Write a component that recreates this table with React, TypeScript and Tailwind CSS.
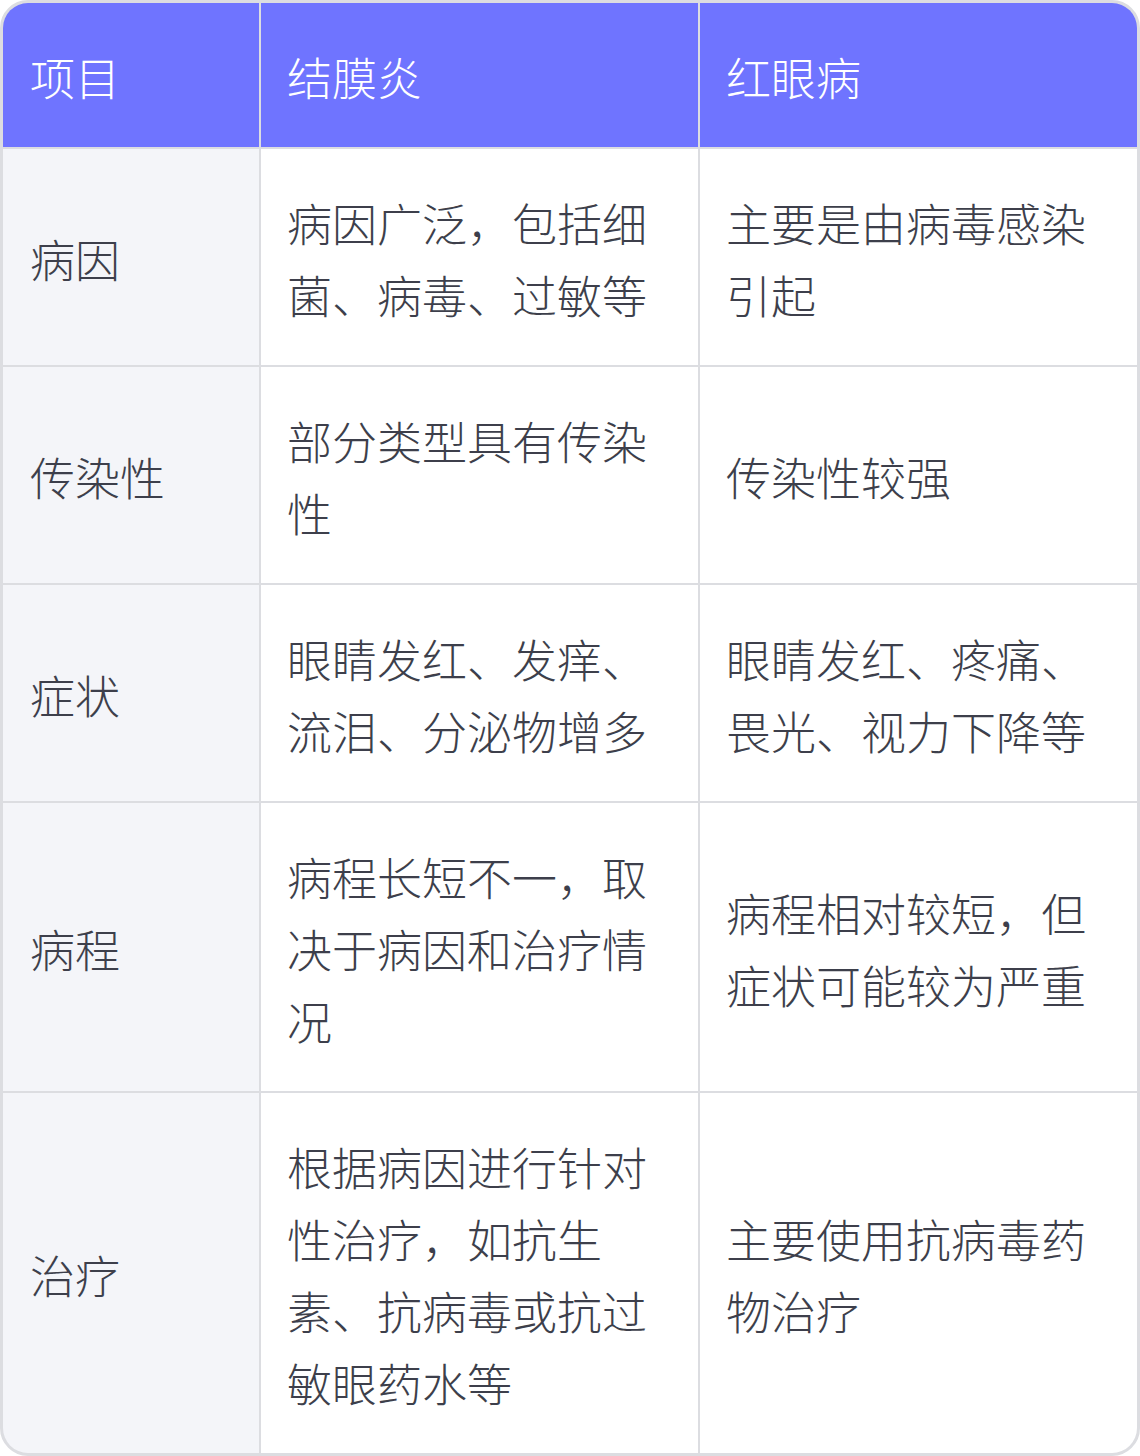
const rows: [string, string, string][] = [
  ['病因', '病因广泛，包括细菌、病毒、过敏等', '主要是由病毒感染引起'],
  ['传染性', '部分类型具有传染性', '传染性较强'],
  ['症状', '眼睛发红、发痒、流泪、分泌物增多', '眼睛发红、疼痛、畏光、视力下降等'],
  ['病程', '病程长短不一，取决于病因和治疗情况', '病程相对较短，但症状可能较为严重'],
  ['治疗', '根据病因进行针对性治疗，如抗生素、抗病毒或抗过敏眼药水等', '主要使用抗病毒药物治疗'],
];

export default function App() {
  return (
    <div
      className="w-[1140px] bg-white"
      style={{ fontFamily: '"Noto Sans CJK SC", "Noto Sans", sans-serif' }}
    >
      <div className="grid grid-cols-[256px_437px_437px] gap-[2px] bg-[#dcdde1] border-[3px] border-[#dcdde1] rounded-[28px] overflow-hidden text-[45px] leading-[72px] font-light">
        {['项目', '结膜炎', '红眼病'].map((h, i) => (
          <div key={h} className={`bg-[#6f74ff] text-white pr-[27px] pt-[38px] pb-[34px] ${i === 0 ? 'pl-[27px]' : 'pl-[26px]'}`}>
            {h}
          </div>
        ))}
        {rows.map(([a, b, c]) => (
          <div key={a} className="contents">
            <div className="bg-[#f4f5f9] text-[#3d3f4b] pl-[27px] pr-[27px] pt-[38px] pb-[34px] flex items-center">{a}</div>
            <div className="bg-white text-[#3d3f4b] pl-[26px] pr-[27px] pt-[38px] pb-[34px] flex items-center">{b}</div>
            <div className="bg-white text-[#3d3f4b] pl-[26px] pr-[27px] pt-[38px] pb-[34px] flex items-center">{c}</div>
          </div>
        ))}
      </div>
    </div>
  );
}
